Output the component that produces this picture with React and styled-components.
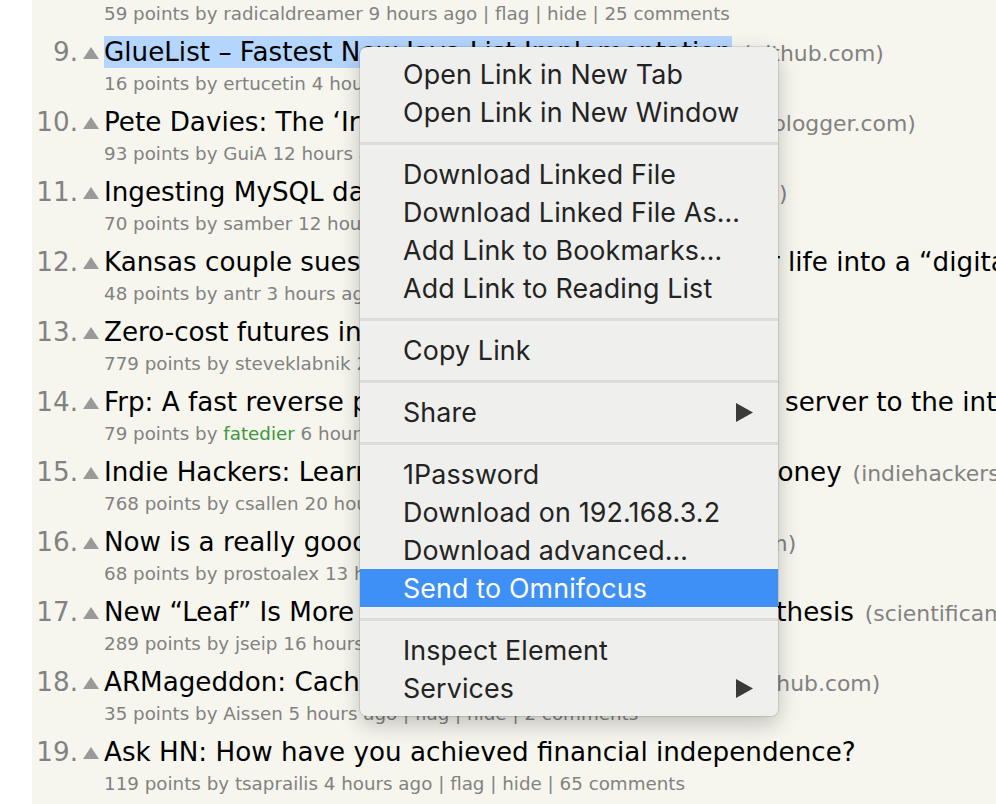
import React from "react";
import styled, { createGlobalStyle } from "styled-components";

const Global = createGlobalStyle`
  html, body { margin: 0; padding: 0; background: #ffffff; }
  body { overflow: hidden; }
`;

const Page = styled.div`
  width: 996px;
  height: 804px;
  overflow: hidden;
  position: relative;
  padding-left: 32px;
  box-sizing: border-box;
  background: #ffffff;
`;

const Board = styled.div`
  height: 100%;
  background: #f6f6ef;
  overflow: hidden;
  font-family: "DejaVu Sans", Verdana, sans-serif;
`;

const List = styled.div`
  margin-top: -34px;
  display: flex;
  flex-direction: column;
  gap: 6px;
`;

const Item = styled.div`
  display: grid;
  grid-template-columns: 46px 26px 1fr;
  grid-template-rows: 32px 32px;
  white-space: nowrap;
`;

const Rank = styled.div`
  font-size: 26.2px;
  line-height: 32px;
  color: #828282;
  text-align: right;
`;

const Vote = styled.div`
  display: flex;
  align-items: center;
  justify-content: center;
  padding-top: 1px;
`;

const Title = styled.div`
  font-size: 26.2px;
  line-height: 32px;
  color: #000000;
  overflow: visible;
`;

const TitleLink = styled.span`
  display: inline-block;
  background: ${(p) => (p.$selected ? "#b4d5fe" : "transparent")};
`;

const Site = styled.span`
  margin-left: 4px;
  font-size: 21.9px;
  color: #828282;
`;

const Sub = styled.div`
  grid-column: 3;
  font-size: 18.3px;
  line-height: 32px;
  color: #828282;
`;

const User = styled.span`
  color: ${(p) => (p.$new ? "#3c963c" : "#828282")};
`;

const Menu = styled.div`
  position: absolute;
  left: 360px;
  top: 47px;
  width: 418px;
  padding: 8px 0 9px;
  box-sizing: border-box;
  background: #efefed;
  border-radius: 7px;
  box-shadow: 0 0 0 1px rgba(0, 0, 0, 0.1), 0 8px 22px rgba(0, 0, 0, 0.22);
  font-family: Inter, "Liberation Sans", sans-serif;
  overflow: hidden;
`;

const MenuItem = styled.div`
  height: 38px;
  display: flex;
  align-items: center;
  justify-content: space-between;
  padding: 0 25px 0 43px;
  font-size: 26.8px;
  letter-spacing: 0.15px;
  color: ${(p) => (p.$active ? "#ffffff" : "#232323")};
  background: ${(p) => (p.$active ? "#3e8ff6" : "transparent")};
`;

const Separator = styled.div`
  height: 24px;
  display: flex;
  align-items: center;
  &::after {
    content: "";
    display: block;
    width: 100%;
    height: 3px;
    background: #dcdcda;
  }
`;

const Arrow = () => (
  <svg width="17" height="19" viewBox="0 0 17 19">
    <polygon points="0,0 17,9.5 0,19" fill="#3a3a3a" />
  </svg>
);

const UpTriangle = () => (
  <svg width="16" height="12" viewBox="0 0 16 12">
    <polygon points="8,0 16,12 0,12" fill="#9a9a9a" />
  </svg>
);

const stories = [
  {
    n: 8,
    title: "Show HN: A tiny database for time series",
    site: "github.com",
    points: 59,
    user: "radicaldreamer",
    age: "9 hours",
    comments: "25 comments",
  },
  {
    n: 9,
    title: "GlueList – Fastest New Java List Implementation",
    site: "github.com",
    points: 16,
    user: "ertucetin",
    age: "4 hours",
    comments: "3 comments",
    selected: true,
  },
  {
    n: 10,
    title: "Pete Davies: The ‘Irrational’ History of the Pencils",
    site: "blogger.com",
    points: 93,
    user: "GuiA",
    age: "12 hours",
    comments: "14 comments",
  },
  {
    n: 11,
    title: "Ingesting MySQL data at scale – Part 1",
    site: "pinterest.com",
    points: 70,
    user: "samber",
    age: "12 hours",
    comments: "9 comments",
  },
  {
    n: 12,
    title: "Kansas couple sues IP-mapper firm for turning their life into a “digital hell”",
    site: "fusion.net",
    points: 48,
    user: "antr",
    age: "3 hours",
    comments: "22 comments",
  },
  {
    n: 13,
    title: "Zero-cost futures in Rust",
    site: "aturon.github.io",
    points: 779,
    user: "steveklabnik",
    age: "21 hours",
    comments: "280 comments",
  },
  {
    n: 14,
    title: "Frp: A fast reverse proxy to help you expose a local server to the internet",
    site: "github.com",
    points: 79,
    user: "fatedier",
    isNew: true,
    age: "6 hours",
    comments: "31 comments",
  },
  {
    n: 15,
    title: "Indie Hackers: Learn how developers are making money",
    site: "indiehackers.com",
    points: 768,
    user: "csallen",
    age: "20 hours",
    comments: "150 comments",
  },
  {
    n: 16,
    title: "Now is a really good time to learn Scala",
    site: "medium.com",
    points: 68,
    user: "prostoalex",
    age: "13 hours",
    comments: "40 comments",
  },
  {
    n: 17,
    title: "New “Leaf” Is More Efficient Than Natural Photosynthesis",
    site: "scientificamerican.com",
    points: 289,
    user: "jseip",
    age: "16 hours",
    comments: "78 comments",
  },
  {
    n: 18,
    title: "ARMageddon: Cache Attacks on Mobile Devices",
    site: "github.com",
    points: 35,
    user: "Aissen",
    age: "5 hours",
    comments: "2 comments",
  },
  {
    n: 19,
    title: "Ask HN: How have you achieved financial independence?",
    points: 119,
    user: "tsaprailis",
    age: "4 hours",
    comments: "65 comments",
  },
];

const menu = [
  ["Open Link in New Tab", "Open Link in New Window"],
  ["Download Linked File", "Download Linked File As…", "Add Link to Bookmarks…", "Add Link to Reading List"],
  ["Copy Link"],
  [{ label: "Share", sub: true }],
  ["1Password", "Download on 192.168.3.2", "Download advanced…", { label: "Send to Omnifocus", active: true }],
  ["Inspect Element", { label: "Services", sub: true }],
];

export default function App() {
  return (
    <>
      <Global />
      <Page>
        <Board>
          <List>
            {stories.map((s) => (
              <Item key={s.n}>
                <Rank>{s.n}.</Rank>
                <Vote>
                  <UpTriangle />
                </Vote>
                <Title>
                  <TitleLink $selected={s.selected}>{s.title}</TitleLink>
                  {s.site && <Site> ({s.site})</Site>}
                </Title>
                <Sub>
                  {s.points} points by <User $new={s.isNew}>{s.user}</User> {s.age} ago | flag | hide | {s.comments}
                </Sub>
              </Item>
            ))}
          </List>
        </Board>
        <Menu>
          {menu.map((group, gi) => (
            <React.Fragment key={gi}>
              {gi > 0 && <Separator />}
              {group.map((it) => {
                const o = typeof it === "string" ? { label: it } : it;
                return (
                  <MenuItem key={o.label} $active={o.active}>
                    <span>{o.label}</span>
                    {o.sub && <Arrow />}
                  </MenuItem>
                );
              })}
            </React.Fragment>
          ))}
        </Menu>
      </Page>
    </>
  );
}
